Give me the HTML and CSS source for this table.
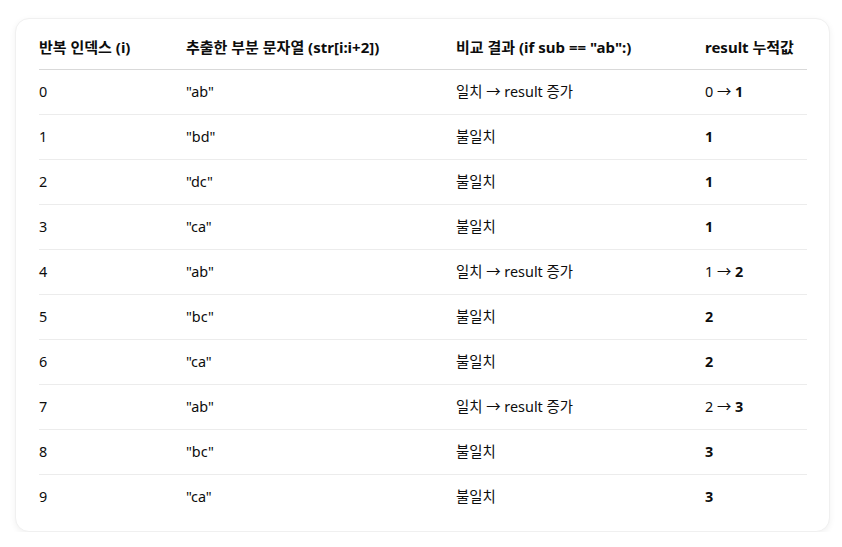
FILE: index.html
```html
<!DOCTYPE html>
<html lang="ko">
<head>
<meta charset="utf-8">
<link rel="stylesheet" href="styles.css">
</head>
<body>
<div class="card">
  <table class="tbl">
    <colgroup>
      <col class="c1"><col class="c2"><col class="c3"><col class="c4">
    </colgroup>
    <thead>
      <tr><th>반복 인덱스 (i)</th><th>추출한 부분 문자열 (str[i:i+2])</th><th>비교 결과 (if sub == "ab":)</th><th>result 누적값</th></tr>
    </thead>
    <tbody>
      <tr><td>0</td><td>"ab"</td><td>일치 → result 증가</td><td>0 → <b>1</b></td></tr>
      <tr><td>1</td><td>"bd"</td><td>불일치</td><td><b>1</b></td></tr>
      <tr><td>2</td><td>"dc"</td><td>불일치</td><td><b>1</b></td></tr>
      <tr><td>3</td><td>"ca"</td><td>불일치</td><td><b>1</b></td></tr>
      <tr><td>4</td><td>"ab"</td><td>일치 → result 증가</td><td>1 → <b>2</b></td></tr>
      <tr><td>5</td><td>"bc"</td><td>불일치</td><td><b>2</b></td></tr>
      <tr><td>6</td><td>"ca"</td><td>불일치</td><td><b>2</b></td></tr>
      <tr><td>7</td><td>"ab"</td><td>일치 → result 증가</td><td>2 → <b>3</b></td></tr>
      <tr><td>8</td><td>"bc"</td><td>불일치</td><td><b>3</b></td></tr>
      <tr><td>9</td><td>"ca"</td><td>불일치</td><td><b>3</b></td></tr>
    </tbody>
  </table>
</div>
</body>
</html>
```
FILE: styles.css
```css
html, body {
  margin: 0;
  padding: 0;
  background: #ffffff;
}
body {
  font-family: "Noto Sans", "Noto Sans CJK KR", sans-serif;
  font-size: 14px;
  color: #0d0d0d;
}
.card {
  margin: 18px 0 0 15px;
  width: 815px;
  box-sizing: border-box;
  padding: 6px 22px 12px 23px;
  background: #fff;
  border: 1px solid #f0f0f0;
  border-radius: 14px;
  box-shadow: 0 2px 6px rgba(0, 0, 0, 0.06);
}
.tbl {
  width: 768px;
  table-layout: fixed;
  border-collapse: separate;
  border-spacing: 0;
}
.c1 { width: 147px; }
.c2 { width: 270px; }
.c3 { width: 249px; }
.c4 { width: 102px; }
.tbl th, .tbl td {
  padding: 0;
  height: 44px;
  text-align: left;
  vertical-align: middle;
  white-space: nowrap;
  line-height: 20px;
}
.tbl th {
  font-size: 15px;
  font-weight: 700;
  border-bottom: 1px solid #d9d9d9;
}
.tbl td {
  font-size: 14.4px;
  font-weight: 400;
  border-bottom: 1px solid #ececec;
}
.tbl tbody tr:last-child td {
  border-bottom: none;
}
.tbl b {
  font-weight: 700;
}
```
